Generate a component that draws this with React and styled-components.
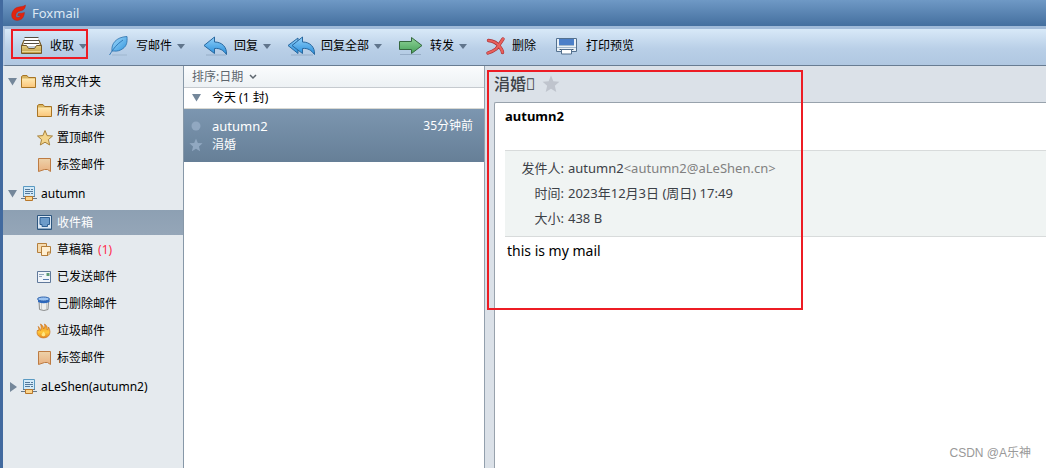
import React from "react";
import styled, { createGlobalStyle } from "styled-components";

const GlobalStyle = createGlobalStyle`
  * { box-sizing: border-box; }
  body {
    margin: 0;
    background: #fff;
    color: #000;
    font-family: "Noto Sans", "Noto Sans CJK SC", sans-serif;
    font-size: 12px;
    line-height: 20px;
  }
  button { font: inherit; color: inherit; border: 0; padding: 0; background: none; white-space: nowrap; }
  svg { display: block; flex: none; overflow: visible; }
  h1, h2, p, dl, dd, ul { margin: 0; padding: 0; }
  ul { list-style: none; }
`;

const Window = styled.div`
  min-height: 100vh;
  display: flex;
  flex-direction: column;
  border-left: 3px solid #426a9f;
  overflow: hidden;
`;

const TitleBar = styled.header`
  height: 26px;
  display: flex;
  align-items: center;
  gap: 5px;
  padding-left: 11px;
  margin-left: -3px;
  background: linear-gradient(#6f99c5, #446f9e);
  border-top-left-radius: 3px;
  color: #dce8f4;
`;

const AppName = styled.h1`
  font-size: 13px;
  font-weight: 400;
`;

const Toolbar = styled.div`
  position: relative;
  height: 40px;
  display: flex;
  align-items: center;
  gap: 16px;
  padding: 0 0 2px 15px;
  border-top: 3px solid #a0bad8;
  border-left: 2px solid #b9cbe1;
  border-bottom: 1px solid #687c92;
  background: linear-gradient(#d8e9f8, #b9cfe7 55%, #b0c7e1);
`;

const ToolButton = styled.button`
  display: flex;
  align-items: center;
  gap: 5px;
`;

const ToolIcon = styled.span`
  display: flex;
  justify-content: flex-end;
  width: ${(p) => p.$width}px;
  margin-right: 1px;
`;

const Frame = styled.div`
  position: absolute;
  pointer-events: none;
  border: 2px solid #ed1c24;
`;

const ToolbarFrame = styled(Frame)`
  left: 6px;
  top: 0;
  width: 77px;
  height: 30px;
`;

const ReaderFrame = styled(Frame)`
  left: 2px;
  top: 4px;
  width: 316px;
  height: 240px;
`;

const Panes = styled.div`
  flex: 1;
  display: flex;
`;

const Sidebar = styled.nav`
  flex: 0 0 181px;
  padding-top: 3px;
  background: #e5eaee;
  border-right: 1px solid #8798a8;
`;

const FolderGroup = styled.section`
  margin-bottom: 4px;
`;

const GroupButton = styled.button`
  width: 100%;
  height: 25px;
  display: flex;
  align-items: center;
  gap: 3px;
  padding-left: 4px;
`;

const Label = styled.span`
  margin-left: 1px;
`;

const FolderList = styled.ul`
  display: flex;
  flex-direction: column;
  gap: 2px;
  padding-top: 4px;
`;

const FolderButton = styled.button`
  width: 100%;
  height: 25px;
  display: flex;
  align-items: center;
  gap: 3px;
  padding-left: 34px;
  color: ${(p) => (p.$selected ? "#fff" : "#000")};
  background: ${(p) => (p.$selected ? "linear-gradient(#8da0b3, #95a6b8)" : "none")};
`;

const Count = styled.span`
  margin-left: 2px;
  color: #ff2b4b;
`;

const MailList = styled.section`
  flex: 0 0 301px;
  background: #fff;
  border-right: 1px solid #93a0ad;
`;

const SortButton = styled.button`
  width: 100%;
  height: 22px;
  display: flex;
  align-items: center;
  gap: 6px;
  padding-left: 8px;
  color: #5d666e;
  background: linear-gradient(#fafcfd, #edf1f4);
  border-bottom: 1px solid #c5cacf;
`;

const DayButton = styled.button`
  width: 100%;
  height: 21px;
  display: flex;
  align-items: center;
  gap: 10px;
  padding-left: 7px;
  border-bottom: 1px solid #d9d9d3;
`;

const MailItem = styled.article`
  height: 53px;
  display: grid;
  grid-template-columns: 14px 1fr auto;
  grid-template-rows: 19px 19px;
  align-items: center;
  align-content: center;
  justify-items: start;
  column-gap: 9px;
  padding: 0 11px 0 5px;
  color: #fff;
  background: linear-gradient(#7c96b0, #667f97);
`;

const Sender = styled.span`
  font-size: 13px;
`;

const Reader = styled.main`
  position: relative;
  flex: 1;
  min-width: 0;
  display: flex;
  flex-direction: column;
  padding-left: 9px;
  background: #dbe1e8;
`;

const SubjectBar = styled.div`
  height: 36px;
  display: flex;
  align-items: center;
  gap: 6px;
`;

const Subject = styled.h2`
  font-size: 16px;
  font-weight: 500;
  color: #3d4247;
`;

const Paper = styled.article`
  position: relative;
  flex: 1;
  padding-left: 10px;
  background: #fff;
  border: solid #98a2ac;
  border-width: 1px 0 0 1px;
  border-top-left-radius: 2px;
`;

const From = styled.h2`
  height: 47px;
  padding-top: 3px;
  font-size: 13px;
`;

const Details = styled.dl`
  display: grid;
  grid-template-columns: 59px 1fr;
  grid-auto-rows: 25px;
  align-items: center;
  column-gap: 4px;
  padding: 4px 0 6px;
  font-size: 13px;
  color: #3c4147;
  background: #f0f4f3;
  border: solid #d8dbdb;
  border-width: 1px 0;

  dt { text-align: right; }
`;

const Address = styled.span`
  color: #808080;
`;

const Body = styled.p`
  padding: 4px 2px;
  font-size: 14px;
`;

const Watermark = styled.span`
  position: absolute;
  right: 15px;
  bottom: 5px;
  color: #999;
  font-family: "Liberation Sans", "Noto Sans CJK SC", sans-serif;
`;

const Caret = () => (
  <svg width="8" height="6" viewBox="0 0 8 6"><path d="M0 1h8L4 6z" fill="#60758c" /></svg>
);

const Fold = ({ open = true }) => (
  <svg width="11" height="10" viewBox="0 0 11 10">
    <path d={open ? "M1 1h9L5.500 8.500z" : "M3 0v10l7-5z"} fill="#74879a" />
  </svg>
);

const Star = ({ size, fill, stroke = "none" }) => (
  <svg width={size} height={size} viewBox="0 0 16 16">
    <path d="M8 .5l2.100 5.100 5.400.4-4.100 3.600 1.300 5.400L8 12.200 3.300 15l1.300-5.400L.5 6l5.400-.4z" fill={fill} stroke={stroke} />
  </svg>
);

const Logo = () => (
  <svg width="16" height="18" viewBox="0 0 16 18">
    <path d="M14.500 1C12 2.800 10 2.300 6.500 3.300 2.800 4.500.6 8 .7 11.500c.1 3 2.300 5 5.500 4.900 4.200-.1 6.800-2.600 7.300-7.900-2 .7-4.100.7-6.200 1l-.6 2.200h2.900c-.6 1.300-1.600 1.900-2.900 1.900-1.600 0-2.200-1-1.900-2.700.4-2.100 1.700-3.500 4.300-4 2.700-.4 5.200-1.400 5.400-5.900z" fill="#e3240f" stroke="#b51c0c" strokeWidth=".4" />
  </svg>
);

const ReceiveIcon = () => (
  <svg width="24" height="20" viewBox="0 0 24 20">
    <defs><linearGradient id="tray" x2="0" y2="1"><stop stopColor="#e5cf83" /><stop offset="1" stopColor="#c09c42" /></linearGradient></defs>
    <path d="M4 4 1.500 10h20L19 4z" fill="#a68b4c" stroke="#73592a" />
    <path d="M5 1.500h13l2 9H3z" fill="#fff" />
    <path d="M4.500 1.500h14M4 4.500h15M4 7.500h15" stroke="#554d40" />
    <path d="M1.500 9.500h5l2 3h6l2-3h5v8h-20z" fill="url(#tray)" stroke="#73592a" strokeLinejoin="round" />
    <path d="M2 15.500h19" stroke="#e8d594" />
  </svg>
);

const FeatherIcon = () => (
  <svg width="22" height="20" viewBox="0 0 22 20">
    <defs><linearGradient id="quill" x2="1" y2="1"><stop stopColor="#a5dcfc" /><stop offset="1" stopColor="#3094dd" /></linearGradient></defs>
    <path d="M4 19h15" stroke="#91a8c0" opacity=".6" />
    <path d="M4 15C3 8 8 1 19 .5c.5 6-.5 9.500-4 12-2.500 2-6 3-9 2.500z" fill="url(#quill)" stroke="#286fab" strokeWidth=".8" />
    <path d="M1.500 19C5 13 9 8 15 4" fill="none" stroke="#2b74b3" strokeWidth=".9" />
  </svg>
);

const ReplyIcon = ({ all }) => (
  <svg width={all ? 28 : 25} height="20" viewBox={all ? "0 0 28 20" : "0 0 25 20"}>
    <defs><linearGradient id="reply" x2="0" y2="1"><stop stopColor="#91d1fa" /><stop offset="1" stopColor="#278dda" /></linearGradient></defs>
    <path d={all ? "M4 19h22" : "M3 19h20"} stroke="#8299b4" opacity=".6" />
    {all && <path d="M11 2 1 9.500l10 8V13L7 9.500 11 6z" fill="url(#reply)" stroke="#29689f" />}
    <path d="M11.500 1 1 9.500l10.500 8v-5C17 12 20 14 23.500 18.500 24 11 19 6 11.500 6z" fill="url(#reply)" stroke="#29689f" strokeLinejoin="round" transform={all ? "translate(4 0)" : undefined} />
  </svg>
);

const ForwardIcon = () => (
  <svg width="26" height="20" viewBox="0 0 26 20">
    <defs><linearGradient id="fwd" x2="0" y2="1"><stop stopColor="#91d39a" /><stop offset="1" stopColor="#45a258" /></linearGradient></defs>
    <path d="M2 18.500h21" stroke="#8299b4" opacity=".6" />
    <path d="M1.500 5.500h12v-4l10.500 8-10.500 8v-4h-12z" fill="url(#fwd)" stroke="#35683f" strokeLinejoin="round" />
  </svg>
);

const DeleteIcon = () => (
  <svg width="20" height="20" viewBox="0 0 20 20" fill="none" strokeLinecap="round">
    <path d="M2.500 4.500c5 .5 9 3 11 6 1.500 2 3 4 3 6M17 3c-3 4-4 7-7 10-2.500 2-5 3-8 4" stroke="#a93035" strokeWidth="3.400" />
    <path d="M2.500 4.500c5 .5 9 3 11 6 1.500 2 3 4 3 6M17 3c-3 4-4 7-7 10-2.500 2-5 3-8 4" stroke="#e9615c" strokeWidth="2.200" />
  </svg>
);

const PrintIcon = () => (
  <svg width="24" height="20" viewBox="0 0 24 20">
    <path d="M.5 2.500h20v13H.5z" fill="#e9f0f6" stroke="#54718f" />
    <path d="M3 3h15v6H3z" fill="#4b7fc8" />
    <path d="M3 9.500h15M1 11.500h19" stroke="#a3b9cc" />
    <path d="M3.500 13.500h14" stroke="#3b566f" />
    <path d="M5.500 13.500h10v4.500h-10z" fill="#fff" stroke="#54718f" />
  </svg>
);

const FolderIcon = () => (
  <svg width="16" height="16" viewBox="0 0 16 16">
    <defs><linearGradient id="folder" x2="0" y2="1"><stop stopColor="#ffe9b0" /><stop offset="1" stopColor="#fbc77c" /></linearGradient></defs>
    <path d="M.5 13.500V2.500L2 1.500h4l1.500 2h7v10z" fill="#d8b561" stroke="#a87525" />
    <path d="M1 4.500h13v8.500H1z" fill="url(#folder)" />
  </svg>
);

const TagIcon = () => (
  <svg width="16" height="16" viewBox="0 0 16 16">
    <defs><linearGradient id="tag" x2="0" y2="1"><stop stopColor="#edd2aa" /><stop offset="1" stopColor="#e9b180" /></linearGradient></defs>
    <path d="M1.500 1.500h12v13q-3-3-6-2-3 1-6 2z" fill="url(#tag)" stroke="#bd7b42" />
  </svg>
);

const AccountIcon = () => (
  <svg width="16" height="16" viewBox="0 0 16 16">
    <path d="M2.500 .5h11v10h-11z" fill="#d3eaf8" stroke="#5a9ac2" />
    <path d="M4 3.500h5M10 3.500h2M4 5.500h8M4 7.500h5M10 7.500h2" stroke="#55799b" />
    <path d="M2 10.500h12M0 12.500h16" stroke="#66798a" />
    <path d="M4.500 10.500h7v4h-7z" fill="#fbd58d" stroke="#b8772a" />
  </svg>
);

const InboxIcon = () => (
  <svg width="16" height="16" viewBox="0 0 16 16">
    <path d="M.5 .5h14v14H.5z" fill="#dbe7f3" stroke="#2d567f" />
    <path d="M3 2.500h9.500v7h-2v2H5v-2H3z" fill="#6d9bc9" stroke="#2f5f92" />
    <path d="M1 13.500h13" stroke="#8da9c5" />
  </svg>
);

const DraftIcon = () => (
  <svg width="16" height="16" viewBox="0 0 16 16" fill="#fff0d3" stroke="#b47f3c">
    <path d="M.5 1.500h9v9h-9z" fill="#f5dbaf" />
    <path d="M4.500 4.500h9V11L11 13.500H4.500z" />
    <path d="M10.500 13v-3H13" fill="#e9bd7a" />
  </svg>
);

const SentIcon = () => (
  <svg width="16" height="16" viewBox="0 0 16 16">
    <path d="M.5 2.500h13v11H.5z" fill="#f1f5fa" stroke="#60799b" />
    <path d="M2 5.500h5M2 7.500h3" stroke="#91a5bc" />
    <path d="M9.500 4h3v3h-3z" fill="#5e9b75" />
    <path d="M6 10.500h6" stroke="#567aac" />
  </svg>
);

const TrashIcon = () => (
  <svg width="16" height="16" viewBox="0 0 16 16">
    <path d="M2 5h9.500l-.5 8.500q-4 2-8.500 0z" fill="#eceeed" stroke="#8b8d8d" />
    <path d="M4.500 7v6M9.500 7v6" stroke="#c7cac9" />
    <path d="M1 3.500v2.500q5.500 2.500 11.500 0V3.500z" fill="#2d69bd" />
    <ellipse cx="6.500" cy="3" rx="6" ry="2" fill="#9cc4f2" stroke="#2d62ac" />
  </svg>
);

const JunkIcon = () => (
  <svg width="16" height="16" viewBox="0 0 16 16">
    <defs><linearGradient id="fire" x2="0" y2="1"><stop stopColor="#e88b22" /><stop offset=".6" stopColor="#ffc638" /><stop offset="1" stopColor="#e28420" /></linearGradient></defs>
    <path d="M1 3.500c2 1 2 3 2.500 4C5 5.500 4 3 3.500 1 6 2.500 6.500 4 6.500 6 8 4.500 8 3 7.500 1c3 2 3 3.500 2.500 6 1-.5 1.500-1.500 1.500-3 2 3.500 2 6.500 0 9-2.500 2.500-7.500 2.500-10 0-2-2-1.500-4-1-6l1 1c.5-1.500.5-3-.5-4.500z" fill="url(#fire)" stroke="#cc741f" strokeWidth=".7" />
    <path d="M6.500 8.500q3 3 1 4.500-3 1-3-1.500z" fill="#ffe681" />
  </svg>
);

const tools = [
  { label: "收取", icon: <ReceiveIcon />, width: 24, menu: true },
  { label: "写邮件", icon: <FeatherIcon />, width: 27, menu: true },
  { label: "回复", icon: <ReplyIcon />, width: 27, menu: true },
  { label: "回复全部", icon: <ReplyIcon all />, width: 28, menu: true },
  { label: "转发", icon: <ForwardIcon />, width: 26, menu: true },
  { label: "删除", icon: <DeleteIcon />, width: 23 },
  { label: "打印预览", icon: <PrintIcon />, width: 28 },
];

const groups = [
  {
    label: "常用文件夹",
    icon: <FolderIcon />,
    folders: [
      { label: "所有未读", icon: <FolderIcon /> },
      { label: "置顶邮件", icon: <Star size={16} fill="#f3d58c" stroke="#a8823c" /> },
      { label: "标签邮件", icon: <TagIcon /> },
    ],
  },
  {
    label: "autumn",
    icon: <AccountIcon />,
    folders: [
      { label: "收件箱", icon: <InboxIcon />, selected: true },
      { label: "草稿箱", icon: <DraftIcon />, count: 1 },
      { label: "已发送邮件", icon: <SentIcon /> },
      { label: "已删除邮件", icon: <TrashIcon /> },
      { label: "垃圾邮件", icon: <JunkIcon /> },
      { label: "标签邮件", icon: <TagIcon /> },
    ],
  },
  { label: "aLeShen(autumn2)", icon: <AccountIcon /> },
];

export default function App() {
  return (
    <>
      <GlobalStyle />
      <Window>
        <TitleBar>
          <Logo />
          <AppName>Foxmail</AppName>
        </TitleBar>
        <Toolbar>
          {tools.map((t) => (
            <ToolButton key={t.label}>
              <ToolIcon $width={t.width}>{t.icon}</ToolIcon>
              {t.label}
              {t.menu && <Caret />}
            </ToolButton>
          ))}
          <ToolbarFrame />
        </Toolbar>
        <Panes>
          <Sidebar>
            {groups.map((g) => (
              <FolderGroup key={g.label}>
                <GroupButton aria-expanded={!!g.folders}>
                  <Fold open={!!g.folders} />
                  {g.icon}
                  <Label>{g.label}</Label>
                </GroupButton>
                {g.folders && (
                  <FolderList>
                    {g.folders.map((f) => (
                      <li key={f.label}>
                        <FolderButton $selected={f.selected}>
                          {f.icon}
                          <Label>{f.label}</Label>
                          {f.count && <Count>({f.count})</Count>}
                        </FolderButton>
                      </li>
                    ))}
                  </FolderList>
                )}
              </FolderGroup>
            ))}
          </Sidebar>
          <MailList>
            <SortButton>
              排序:日期
              <svg width="8" height="6" viewBox="0 0 8 6"><path d="M1 1l3 3 3-3" fill="none" stroke="#5d666e" strokeWidth="1.500" /></svg>
            </SortButton>
            <DayButton aria-expanded="true">
              <Fold />
              今天 (1 封)
            </DayButton>
            <MailItem>
              <svg width="14" height="14" viewBox="0 0 14 14"><circle cx="7" cy="7" r="4.500" fill="#91a8c1" /></svg>
              <Sender>autumn2</Sender>
              <time>35分钟前</time>
              <Star size={14} fill="#91a8c1" />
              <span>涓婚</span>
            </MailItem>
          </MailList>
          <Reader>
            <SubjectBar>
              <Subject>{"涓婚\uE57D"}</Subject>
              <Star size={18} fill="#bfc4cd" />
            </SubjectBar>
            <Paper>
              <From>autumn2</From>
              <Details>
                <dt>发件人:</dt>
                <dd>autumn2<Address>&lt;autumn2@aLeShen.cn&gt;</Address></dd>
                <dt>时间:</dt>
                <dd>2023年12月3日 (周日) 17:49</dd>
                <dt>大小:</dt>
                <dd>438 B</dd>
              </Details>
              <Body>this is my mail</Body>
              <Watermark>CSDN @A乐神</Watermark>
            </Paper>
            <ReaderFrame />
          </Reader>
        </Panes>
      </Window>
    </>
  );
}
